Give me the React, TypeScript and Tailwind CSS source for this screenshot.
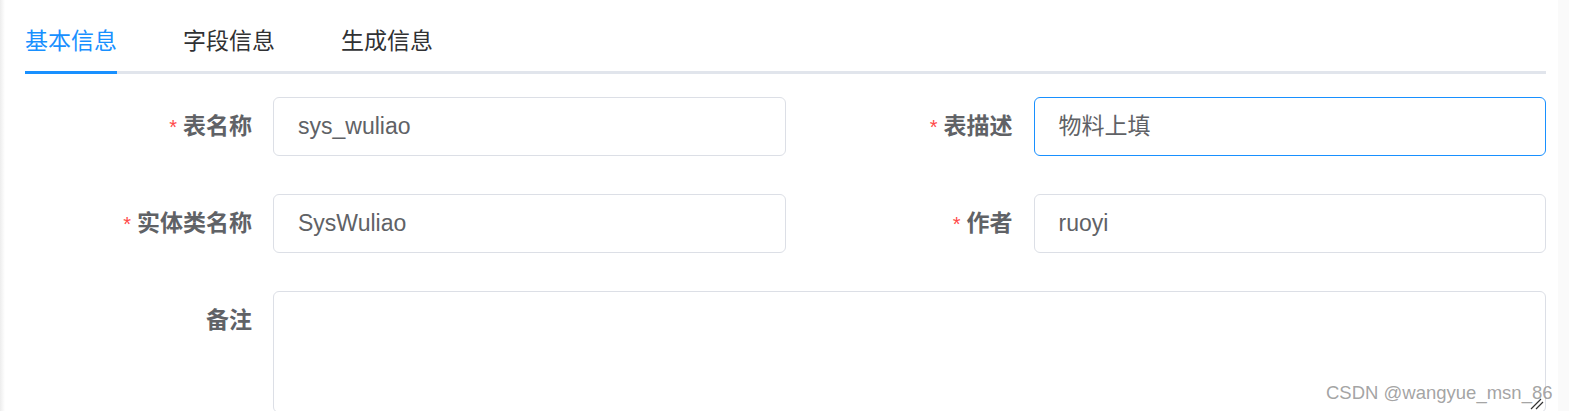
const font = { fontFamily: '"Liberation Sans", "Noto Sans CJK SC", sans-serif' };

const tabs = ["基本信息", "字段信息", "生成信息"];

function Field({
  label,
  value,
  focused
}: {
  label: string;
  value: string;
  focused?: boolean;
}) {
  return (
    <div className="flex">
      <label className="flex h-[59px] w-[248px] shrink-0 items-center justify-end pr-[21px] text-[23px] font-bold text-[#606266]">
        <span className="mr-[6px] text-[20px] font-normal text-[#ff4949]">*</span>
        {label}
      </label>
      <div
        className={
          focused
            ? "flex h-[59px] flex-1 items-center rounded-[6px] border border-[#1890ff] pl-[24px] text-[23px] text-[#606266]"
            : "flex h-[59px] flex-1 items-center rounded-[6px] border border-[#dcdfe6] pl-[24px] text-[23px] text-[#606266]"
        }
      >
        {value}
      </div>
    </div>
  );
}

export default function App() {
  return (
    <div className="flex h-[411px] w-full overflow-hidden bg-white" style={font}>
      <div className="w-[5px] shrink-0 bg-gradient-to-r from-[#ededed] to-white" />
      <main className="relative flex-1 pl-[20px]">
        <div className="w-[1521px]">
          <div className="flex gap-[66px] border-b-[3px] border-[#e1e5ec] pt-[25px]">
            {tabs.map((t, i) => (
              <span
                key={t}
                className={
                  i === 0
                    ? "-mb-[3px] border-b-[3px] border-[#1890ff] pb-[14px] text-[23px] leading-[32px] text-[#1890ff]"
                    : "-mb-[3px] border-b-[3px] border-transparent pb-[14px] text-[23px] leading-[32px] text-[#303133]"
                }
              >
                {t}
              </span>
            ))}
          </div>

          <div className="mt-[23px] grid grid-cols-2 gap-y-[38px]">
            <Field label="表名称" value="sys_wuliao" />
            <Field label="表描述" value="物料上填" focused />
            <Field label="实体类名称" value="SysWuliao" />
            <Field label="作者" value="ruoyi" />
            <div className="col-span-2 flex">
              <label className="h-[59px] w-[248px] shrink-0 pr-[21px] text-right text-[23px] font-bold leading-[59px] text-[#606266]">
                备注
              </label>
              <div className="relative h-[122px] flex-1 rounded-[6px] border border-[#dcdfe6]">
                <svg
                  className="absolute bottom-[2px] right-[1px]"
                  width="14"
                  height="12"
                  viewBox="0 0 14 12"
                >
                  <path d="M1 11 L11 1 M6 11 L13 4" stroke="#333" strokeWidth="1.2" fill="none" />
                </svg>
              </div>
            </div>
          </div>
        </div>
        <span className="absolute left-[1321px] top-[379px] text-[18.5px] text-[#8c8c8c]/80">
          CSDN @wangyue_msn_86
        </span>
      </main>
      <div className="w-[11px] shrink-0 bg-[#fafafa]" />
    </div>
  );
}
